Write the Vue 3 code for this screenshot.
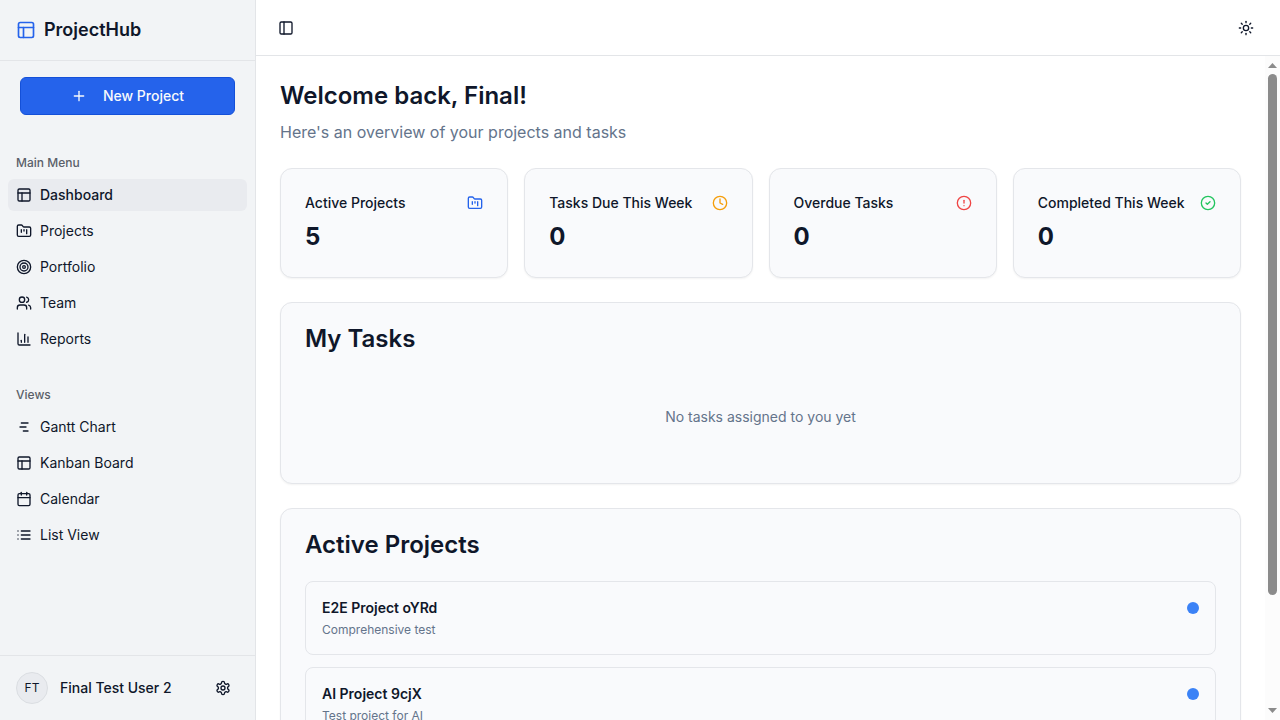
<script setup>
import { h } from 'vue'

const circle = (r) => `M${12 - r} 12a${r} ${r} 0 1 0 ${2 * r} 0a${r} ${r} 0 1 0 ${-2 * r} 0`
const box = 'M5 3h14a2 2 0 0 1 2 2v14a2 2 0 0 1-2 2H5a2 2 0 0 1-2-2V5a2 2 0 0 1 2-2z'

const icons = {
  layout: [box, 'M3 9h18', 'M9 21V9'],
  panel: [box, 'M9 3v18'],
  plus: ['M5 12h14', 'M12 5v14'],
  folder: [
    'M4 20h16a2 2 0 0 0 2-2V8a2 2 0 0 0-2-2h-7.93a2 2 0 0 1-1.66-.9l-.82-1.2A2 2 0 0 0 7.93 3H4a2 2 0 0 0-2 2v13c0 1.1.9 2 2 2Z',
    'M8 10v4', 'M12 10v2', 'M16 10v6'
  ],
  target: [circle(10), circle(6), circle(2)],
  users: [
    'M16 21v-2a4 4 0 0 0-4-4H6a4 4 0 0 0-4 4v2',
    'M5 7a4 4 0 1 0 8 0a4 4 0 1 0-8 0',
    'M22 21v-2a4 4 0 0 0-3-3.87', 'M16 3.13a4 4 0 0 1 0 7.75'
  ],
  chart: ['M3 3v16a2 2 0 0 0 2 2h16', 'M18 17V9', 'M13 17V5', 'M8 17v-3'],
  gantt: ['M8 6h10', 'M6 12h9', 'M11 18h7'],
  calendar: ['M8 2v4', 'M16 2v4', 'M5 4h14a2 2 0 0 1 2 2v14a2 2 0 0 1-2 2H5a2 2 0 0 1-2-2V6a2 2 0 0 1 2-2z', 'M3 10h18'],
  list: ['M8 6h13', 'M8 12h13', 'M8 18h13', 'M3 6h.01', 'M3 12h.01', 'M3 18h.01'],
  clock: [circle(10), 'M12 6v6l4 2'],
  alert: [circle(10), 'M12 8v4', 'M12 16h.01'],
  check: [circle(10), 'M9 12l2 2 4-4'],
  sun: [
    circle(4), 'M12 2v2', 'M12 20v2', 'M4.93 4.93l1.41 1.41', 'M17.66 17.66l1.41 1.41',
    'M2 12h2', 'M20 12h2', 'M6.34 17.66l-1.41 1.41', 'M19.07 4.93l-1.41 1.41'
  ],
  settings: [
    'M12.22 2h-.44a2 2 0 0 0-2 2v.18a2 2 0 0 1-1 1.73l-.43.25a2 2 0 0 1-2 0l-.15-.08a2 2 0 0 0-2.73.73l-.22.38a2 2 0 0 0 .73 2.73l.15.1a2 2 0 0 1 1 1.72v.51a2 2 0 0 1-1 1.74l-.15.09a2 2 0 0 0-.73 2.73l.22.38a2 2 0 0 0 2.73.73l.15-.08a2 2 0 0 1 2 0l.43.25a2 2 0 0 1 1 1.73V20a2 2 0 0 0 2 2h.44a2 2 0 0 0 2-2v-.18a2 2 0 0 1 1-1.73l.43-.25a2 2 0 0 1 2 0l.15.08a2 2 0 0 0 2.73-.73l.22-.39a2 2 0 0 0-.73-2.73l-.15-.08a2 2 0 0 1-1-1.74v-.5a2 2 0 0 1 1-1.74l.15-.09a2 2 0 0 0 .73-2.73l-.22-.38a2 2 0 0 0-2.73-.73l-.15.08a2 2 0 0 1-2 0l-.43-.25a2 2 0 0 1-1-1.73V4a2 2 0 0 0-2-2z',
    circle(3)
  ]
}

const Icon = (props) =>
  h('svg', {
    width: props.size || 16, height: props.size || 16, viewBox: '0 0 24 24', fill: 'none',
    stroke: 'currentColor', 'stroke-width': 2, 'stroke-linecap': 'round', 'stroke-linejoin': 'round',
    'aria-hidden': 'true'
  }, icons[props.name].map((d) => h('path', { d })))
Icon.props = ['name', 'size']

const groups = [
  {
    label: 'Main Menu',
    items: [
      { text: 'Dashboard', icon: 'layout', active: true },
      { text: 'Projects', icon: 'folder' },
      { text: 'Portfolio', icon: 'target' },
      { text: 'Team', icon: 'users' },
      { text: 'Reports', icon: 'chart' }
    ]
  },
  {
    label: 'Views',
    items: [
      { text: 'Gantt Chart', icon: 'gantt' },
      { text: 'Kanban Board', icon: 'layout' },
      { text: 'Calendar', icon: 'calendar' },
      { text: 'List View', icon: 'list' }
    ]
  }
]

const stats = [
  { title: 'Active Projects', value: 5, icon: 'folder', tone: 'blue' },
  { title: 'Tasks Due This Week', value: 0, icon: 'clock', tone: 'amber' },
  { title: 'Overdue Tasks', value: 0, icon: 'alert', tone: 'red' },
  { title: 'Completed This Week', value: 0, icon: 'check', tone: 'green' }
]

const projects = [
  { name: 'E2E Project oYRd', description: 'Comprehensive test' },
  { name: 'AI Project 9cjX', description: 'Test project for AI' }
]
</script>

<template>
  <div class="app">
    <aside class="sidebar">
      <div class="brand">
        <Icon name="layout" :size="20" class="blue" />
        <span>ProjectHub</span>
      </div>
      <div class="create">
        <button type="button" class="new-project"><Icon name="plus" />New Project</button>
      </div>
      <nav class="nav">
        <section v-for="group in groups" :key="group.label" class="group">
          <h2 class="group-label">{{ group.label }}</h2>
          <ul class="menu">
            <li v-for="item in group.items" :key="item.text">
              <a href="#" class="item" :class="{ active: item.active }">
                <Icon :name="item.icon" />{{ item.text }}
              </a>
            </li>
          </ul>
        </section>
      </nav>
      <div class="account">
        <span class="avatar">FT</span>
        <span class="user">Final Test User 2</span>
        <button type="button" class="icon-button" aria-label="Settings"><Icon name="settings" /></button>
      </div>
    </aside>

    <div class="content">
      <header class="topbar">
        <button type="button" class="icon-button small" aria-label="Toggle sidebar"><Icon name="panel" /></button>
        <button type="button" class="icon-button large" aria-label="Toggle theme"><Icon name="sun" /></button>
      </header>
      <div class="viewport">
        <main class="page">
          <div>
            <h1 class="title">Welcome back, Final!</h1>
            <p class="subtitle">Here's an overview of your projects and tasks</p>
          </div>
          <div class="stats">
            <article v-for="stat in stats" :key="stat.title" class="card">
              <div class="stat-head">
                <h2 class="stat-title">{{ stat.title }}</h2>
                <Icon :name="stat.icon" :class="stat.tone" />
              </div>
              <div class="stat-value">{{ stat.value }}</div>
            </article>
          </div>
          <section class="card">
            <h2 class="card-title">My Tasks</h2>
            <p class="empty">No tasks assigned to you yet</p>
          </section>
          <section class="card">
            <h2 class="card-title">Active Projects</h2>
            <ul class="projects">
              <li v-for="project in projects" :key="project.name" class="project">
                <div>
                  <h3 class="project-name">{{ project.name }}</h3>
                  <p class="project-text">{{ project.description }}</p>
                </div>
                <span class="dot"></span>
              </li>
            </ul>
          </section>
        </main>
        <div class="scrollbar" aria-hidden="true">
          <svg class="arrow" width="9" height="5" viewBox="0 0 9 5"><path d="M0 5L4.500 0L9 5z" /></svg>
          <div class="track"><div class="thumb"></div></div>
          <svg class="arrow" width="9" height="5" viewBox="0 0 9 5"><path d="M0 0L4.500 5L9 0z" /></svg>
        </div>
      </div>
    </div>
  </div>
</template>

<style>
body {
  margin: 0;
}
</style>

<style scoped>
.app,
.app * {
  box-sizing: border-box;
}
.app {
  display: flex;
  height: 100vh;
  overflow: hidden;
  background: #fff;
  color: #0f172a;
  font: 400 14px/20px Inter, "Liberation Sans", sans-serif;
}
h1, h2, h3, p, ul {
  margin: 0;
  padding: 0;
}
ul {
  list-style: none;
}
svg {
  display: block;
  flex-shrink: 0;
}
button {
  font: inherit;
  color: inherit;
  cursor: pointer;
}
.blue { color: #2563eb; }
.amber { color: #f59e0b; }
.red { color: #ef4444; }
.green { color: #22c55e; }

.sidebar {
  display: flex;
  flex-direction: column;
  flex-shrink: 0;
  width: 256px;
  background: #f2f4f6;
  border-right: 1px solid #e3e5e8;
}
.brand {
  display: flex;
  align-items: center;
  gap: 8px;
  padding: 16px;
  border-bottom: 1px solid #e3e5e8;
  font-size: 18px;
  line-height: 28px;
  font-weight: 600;
}
.create {
  padding: 16px 20px;
}
.new-project {
  display: flex;
  align-items: center;
  justify-content: center;
  gap: 16px;
  width: 100%;
  height: 38px;
  border: 1px solid #1450d8;
  border-radius: 6px;
  background: #2563eb;
  color: #f8fafc;
  font-weight: 500;
}
.nav {
  display: flex;
  flex: 1;
  flex-direction: column;
  gap: 8px;
  min-height: 0;
  padding-top: 8px;
  overflow: hidden;
}
.group {
  padding: 8px;
}
.group-label {
  padding: 8px;
  font-size: 12px;
  line-height: 16px;
  font-weight: 500;
  color: #5a5f69;
}
.menu {
  display: grid;
  gap: 4px;
}
.item {
  display: flex;
  align-items: center;
  gap: 8px;
  height: 32px;
  padding: 0 8px;
  border-radius: 6px;
  color: inherit;
  text-decoration: none;
}
.item.active {
  background: #e9ebef;
  font-weight: 500;
}
.account {
  display: flex;
  align-items: center;
  gap: 12px;
  padding: 16px;
  border-top: 1px solid #e3e5e8;
}
.avatar {
  display: grid;
  place-items: center;
  width: 32px;
  height: 32px;
  border: 1px solid #dbdee2;
  border-radius: 50%;
  background: #e9ebef;
  font-size: 12px;
}
.user {
  flex: 1;
  font-weight: 500;
}
.icon-button {
  display: grid;
  place-items: center;
  width: 32px;
  height: 32px;
  padding: 0;
  border: 0;
  border-radius: 6px;
  background: none;
}
.icon-button.small {
  width: 28px;
}
.icon-button.large {
  width: 36px;
}

.content {
  display: flex;
  flex: 1;
  flex-direction: column;
  min-width: 0;
}
.topbar {
  display: flex;
  align-items: center;
  justify-content: space-between;
  flex-shrink: 0;
  height: 56px;
  padding: 0 16px;
  border-bottom: 1px solid #e3e5e8;
}
.viewport {
  display: flex;
  flex: 1;
  min-height: 0;
}
.page {
  display: flex;
  flex: 1;
  flex-direction: column;
  gap: 24px;
  min-width: 0;
  padding: 24px 24px 64px;
  overflow-y: auto;
  scrollbar-width: none;
}
.scrollbar {
  display: flex;
  flex-direction: column;
  align-items: center;
  gap: 6px;
  width: 15px;
  padding: 7px 0;
  background: #fcfcfc;
}
.arrow {
  fill: #8b8b8b;
}
.track {
  flex: 1;
}
.thumb {
  width: 9px;
  height: 83%;
  border-radius: 5px;
  background: #8b8b8b;
}
.title {
  font-size: 24px;
  line-height: 32px;
  font-weight: 600;
}
.subtitle {
  margin-top: 8px;
  font-size: 16px;
  line-height: 24px;
  color: #64748b;
}
.stats {
  display: grid;
  grid-template-columns: repeat(4, minmax(0, 1fr));
  gap: 16px;
}
.card {
  flex-shrink: 0;
  padding: 24px;
  border: 1px solid #e4e6ea;
  border-radius: 12px;
  background: #f9fafc;
  box-shadow: 0 1px 2px rgba(0, 0, 0, 0.05);
}
.stat-head {
  display: flex;
  align-items: center;
  justify-content: space-between;
  margin-bottom: 8px;
}
.stat-title {
  font-size: 14px;
  font-weight: 500;
  white-space: nowrap;
}
.stat-value {
  font-size: 24px;
  line-height: 32px;
  font-weight: 700;
}
.card-title {
  margin-bottom: 24px;
  font-size: 24px;
  line-height: 24px;
  font-weight: 600;
}
.empty {
  padding: 32px 0;
  text-align: center;
  color: #64748b;
}
.projects {
  display: grid;
  gap: 12px;
}
.project {
  display: flex;
  justify-content: space-between;
  padding: 16px;
  border: 1px solid #e4e6ea;
  border-radius: 8px;
}
.project-name {
  font-size: 14px;
  font-weight: 600;
}
.project-text {
  margin-top: 4px;
  font-size: 12px;
  line-height: 16px;
  color: #64748b;
}
.dot {
  width: 12px;
  height: 12px;
  margin: 4px 0;
  border-radius: 50%;
  background: #3b82f6;
}
</style>
